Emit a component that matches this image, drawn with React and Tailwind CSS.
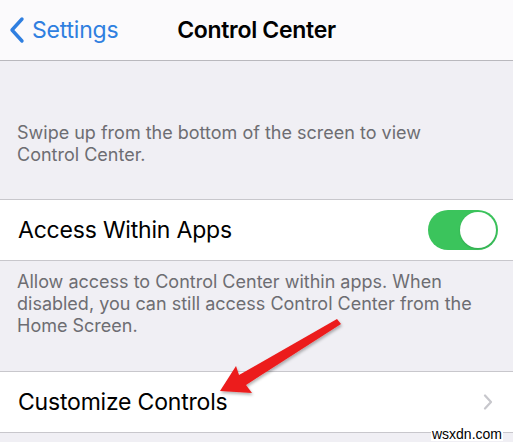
const Separator = () => <div className="h-px bg-[#c8c7cc]" />

const Toggle = () => (
  <div className="w-[70px] h-[40px] rounded-full bg-[#3bc45c] flex items-center justify-end p-[2px]">
    <div className="w-[36px] h-[36px] rounded-full bg-white shadow-[0_1px_2px_rgba(0,0,0,0.15)]" />
  </div>
)

const Arrow = () => (
  <svg className="absolute left-0 top-0 pointer-events-none" width="513" height="442" viewBox="0 0 513 442">
    <defs>
      <filter id="sh" x="-20%" y="-20%" width="140%" height="140%">
        <feDropShadow dx="1" dy="2" stdDeviation="1.5" floodColor="#000" floodOpacity="0.3" />
      </filter>
    </defs>
    <polygon
      points="220,391 252,393 246,385 341,324 337,319 239,375 236,366"
      fill="#ec1c1c"
      filter="url(#sh)"
    />
  </svg>
)

export default function App() {
  return (
    <div className="relative w-[513px] h-[442px] overflow-hidden bg-[#f0eff4] font-['Inter','Liberation_Sans',sans-serif]">
      <div className="h-[61px] bg-[#fbfafc] border-b border-[#b9b8bd] flex items-center relative">
        <div className="absolute left-[8px] top-0 h-full flex items-center text-[#2f7fe0]">
          <svg width="18" height="28" viewBox="0 0 18 28" className="mr-[6px]">
            <path d="M14 3 L4 14 L14 25" fill="none" stroke="#2f7fe0" strokeWidth="3.4" strokeLinecap="round" strokeLinejoin="round" />
          </svg>
          <span className="text-[23px] tracking-[-0.2px]">Settings</span>
        </div>
        <div className="w-full text-center text-[23px] font-semibold text-black tracking-[-0.3px]">Control Center</div>
      </div>

      <div className="pt-[61px] pb-[33px] px-[17px] text-[18px] leading-[22px] text-[#6d6d72]">
        Swipe up from the bottom of the screen to view<br />Control Center.
      </div>

      <Separator />
      <div className="h-[60px] bg-white flex items-center justify-between pl-[18px] pr-[15px]">
        <span className="text-[23px] text-black tracking-[-0.2px]">Access Within Apps</span>
        <Toggle />
      </div>
      <Separator />

      <div className="pt-[10px] pb-[34px] px-[17px] text-[18px] leading-[22px] text-[#6d6d72]">
        Allow access to Control Center within apps. When<br />disabled, you can still access Control Center from the<br />Home Screen.
      </div>

      <Separator />
      <div className="h-[60px] bg-white flex items-center justify-between pl-[18px] pr-[20px]">
        <span className="text-[23px] text-black tracking-[-0.2px]">Customize Controls</span>
        <svg width="10" height="16" viewBox="0 0 10 16">
          <path d="M2 1.5 L8 8 L2 14.5" fill="none" stroke="#c7c7cc" strokeWidth="2.2" strokeLinecap="round" strokeLinejoin="round" />
        </svg>
      </div>
      <Separator />

      <Arrow />

      <div className="absolute right-[10px] bottom-[1px] bg-white px-[1px] text-[14px] leading-[14px] text-black font-['Liberation_Sans',sans-serif]">
        wsxdn.com
      </div>
    </div>
  )
}
